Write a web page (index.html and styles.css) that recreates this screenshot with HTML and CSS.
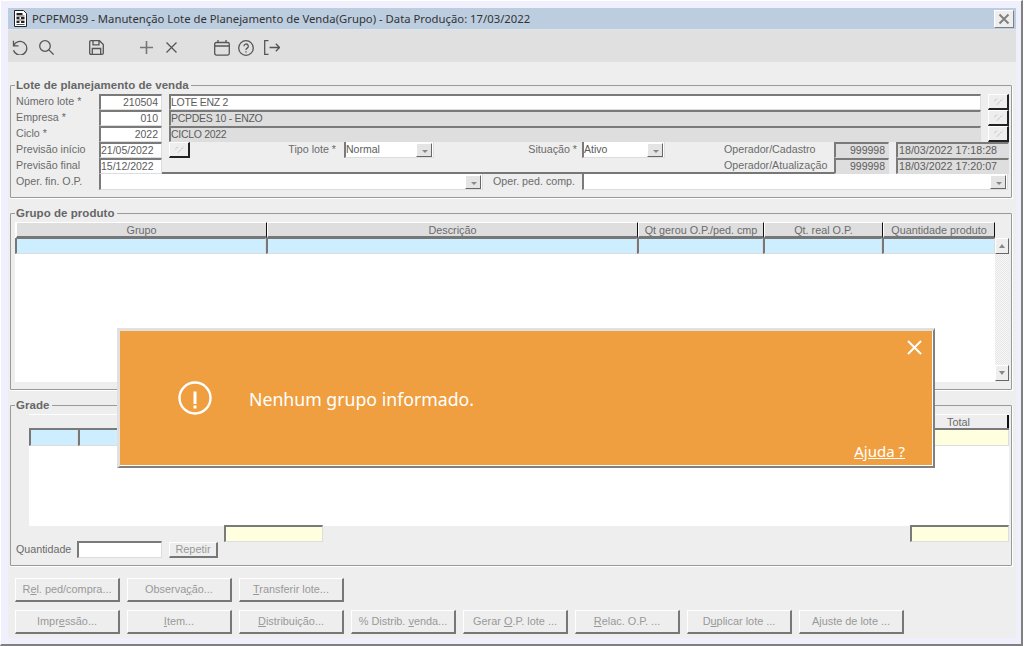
FILE: index.html
```html
<!DOCTYPE html>
<html lang="pt">
<head>
<meta charset="utf-8">
<title>PCPFM039</title>
<link rel="stylesheet" href="styles.css">
</head>
<body>
<div class="window">
  <header class="titlebar">
    <svg class="title-icon" width="13" height="17" viewBox="0 0 13 17"><path d="M.5.5h9l3 3v13H.5z" fill="#fff" stroke="#222"/><path d="M2.500 3h6v2h-6zM2.500 7h3v2h-3zM7 7h3.500v2H7zM2.500 11h3v2h-3zM7 11h3.500v2H7z" fill="#222"/><path d="M2.500 6h8M2.500 10h8M2.500 14.500h8" stroke="#555"/></svg>
    <span class="title-text">PCPFM039 - Manutenção Lote de Planejamento de Venda(Grupo) - Data Produção: 17/03/2022</span>
    <span class="title-close"><svg width="12" height="12" viewBox="0 0 12 12"><path d="M1.500 1.500l9 9M10.500 1.500l-9 9" stroke="#808080" stroke-width="2"/></svg></span>
  </header>
  <nav class="toolbar">
    <svg class="ti ti-undo" width="17" height="15" viewBox="0 0 17 15"><path d="M1.500 .8v5h5M1.700 5.700a6.800 6.800 0 1 1-.2 4.500"/></svg>
    <svg class="ti ti-search" width="15" height="15" viewBox="0 0 15 15"><circle cx="6" cy="6" r="5.300"/><path d="M9.900 9.900l4.700 4.700"/></svg>
    <svg class="ti ti-save" width="15" height="15" viewBox="0 0 15 15"><path d="M.7 2q0-1.300 1.300-1.300h8.500l3.800 3.800V13q0 1.300-1.300 1.300H2q-1.300 0-1.300-1.300zM4 .8v4h6v-4M3.300 14.200V8.500h8.400v5.700"/></svg>
    <svg class="ti ti-plus" width="13" height="13" viewBox="0 0 13 13"><path d="M6.500 0v13M0 6.500h13"/></svg>
    <svg class="ti ti-x" width="11" height="11" viewBox="0 0 11 11"><path d="M.5.500l10 10M10.500.500l-10 10"/></svg>
    <svg class="ti ti-cal" width="16" height="16" viewBox="0 0 16 16"><path d="M2.500 2.500h11q1.800 0 1.800 1.800v9q0 1.800-1.800 1.800h-11q-1.800 0-1.800-1.800v-9q0-1.800 1.800-1.800zM.7 6h14.600M4 0v2.500M12 0v2.500"/></svg>
    <svg class="ti ti-help" width="16" height="16" viewBox="0 0 16 16"><circle cx="8" cy="8" r="7.300"/><path d="M5.900 6.200a2.200 2.200 0 1 1 3.300 1.900c-.8.500-1.200.9-1.200 1.800M8 11.200v1.200"/></svg>
    <svg class="ti ti-exit" width="16" height="15" viewBox="0 0 16 15"><path d="M4.500.7H.7v13.600h3.800M5.500 7.500h10M11.800 3.800l3.700 3.700-3.700 3.700"/></svg>
  </nav>
  <main class="content">
    <section class="group group-lote">
      <h2 class="legend">Lote de planejamento de venda</h2>
      <div class="row">
        <label class="lbl">Número lote *</label>
        <span class="field w-code num">210504</span>
        <span class="field w-desc">LOTE ENZ 2</span>
        <span class="lookup"><svg width="9" height="7" viewBox="0 0 9 7"><path d="M0 3.500L3 .5M3 6.500L8.500 1"/></svg></span>
      </div>
      <div class="row">
        <label class="lbl">Empresa *</label>
        <span class="field w-code num">010</span>
        <span class="field w-desc ro">PCPDES 10 - ENZO</span>
        <span class="lookup"><svg width="9" height="7" viewBox="0 0 9 7"><path d="M0 3.500L3 .5M3 6.500L8.500 1"/></svg></span>
      </div>
      <div class="row">
        <label class="lbl">Ciclo *</label>
        <span class="field w-code num">2022</span>
        <span class="field w-desc ro">CICLO 2022</span>
        <span class="lookup"><svg width="9" height="7" viewBox="0 0 9 7"><path d="M0 3.500L3 .5M3 6.500L8.500 1"/></svg></span>
      </div>
      <div class="row">
        <label class="lbl">Previsão início</label>
        <span class="field w-code">21/05/2022</span>
        <span class="lookup"><svg width="9" height="7" viewBox="0 0 9 7"><path d="M0 3.500L3 .5M3 6.500L8.500 1"/></svg></span>
        <label class="lbl-r w-tipo">Tipo lote *</label>
        <span class="field combo w-sel1">Normal<b class="drop"></b></span>
        <label class="lbl-r w-sit">Situação *</label>
        <span class="field combo w-sel2">Ativo<b class="drop"></b></span>
        <label class="lbl-op">Operador/Cadastro</label>
        <span class="field ro num w-opn">999998</span>
        <span class="field ro w-opd">18/03/2022 17:18:28</span>
      </div>
      <div class="row">
        <label class="lbl">Previsão final</label>
        <span class="field w-code">15/12/2022</span>
        <span class="ruled"></span>
        <label class="lbl-op lbl-op2">Operador/Atualização</label>
        <span class="field ro num w-opn">999998</span>
        <span class="field ro w-opd">18/03/2022 17:20:07</span>
      </div>
      <div class="row">
        <label class="lbl">Oper. fin. O.P.</label>
        <span class="field combo w-fin"><b class="drop"></b></span>
        <label class="lbl-r w-ped">Oper. ped. comp.</label>
        <span class="field combo w-comp"><b class="drop"></b></span>
      </div>
    </section>

    <section class="group group-prod">
      <h2 class="legend">Grupo de produto</h2>
      <div class="table-wrap">
        <div class="table">
          <div class="thead">
            <span class="th c-grupo">Grupo</span>
            <span class="th c-desc">Descrição</span>
            <span class="th c-qt1">Qt gerou O.P./ped. cmp</span>
            <span class="th c-qt2">Qt. real O.P.</span>
            <span class="th c-qt3">Quantidade produto</span>
          </div>
          <div class="tr">
            <span class="td c-grupo"></span>
            <span class="td c-desc"></span>
            <span class="td c-qt1"></span>
            <span class="td c-qt2"></span>
            <span class="td c-qt3"></span>
          </div>
        </div>
        <div class="scroll">
          <span class="sbtn"><i class="up"></i></span>
          <span class="strack"></span>
          <span class="sbtn"><i class="down"></i></span>
        </div>
      </div>
    </section>

    <section class="group group-grade">
      <h2 class="legend">Grade</h2>
      <div class="grade-table">
        <div class="grade-head"><span class="th th-total">Total</span></div>
        <div class="grade-row">
          <span class="td g-a"></span>
          <span class="td g-b"></span>
          <span class="g-fill"></span>
          <span class="g-total"></span>
        </div>
      </div>
      <div class="grade-sum">
        <span class="yellow y-a"></span>
        <span class="yellow y-b"></span>
      </div>
      <div class="qty-row">
        <label class="lbl-q">Quantidade</label>
        <span class="field w-qty"></span>
        <span class="btn btn-rep">Repetir</span>
      </div>
    </section>

    <div class="actions">
      <div class="btn-row">
        <span class="btn">R<u>e</u>l. ped/compra...</span>
        <span class="btn">Observa<u>ç</u>ão...</span>
        <span class="btn"><u>T</u>ransferir lote...</span>
      </div>
      <div class="btn-row">
        <span class="btn">Impr<u>e</u>ssão...</span>
        <span class="btn"><u>I</u>tem...</span>
        <span class="btn"><u>D</u>istribuição...</span>
        <span class="btn">% Distrib. <u>v</u>enda...</span>
        <span class="btn">Gerar <u>O</u>.P. lote ...</span>
        <span class="btn"><u>R</u>elac. O.P. ...</span>
        <span class="btn">D<u>u</u>plicar lote ...</span>
        <span class="btn">A<u>j</u>uste de lote ...</span>
      </div>
    </div>
  </main>

  <div class="toast">
    <svg class="toast-x" width="15" height="15" viewBox="0 0 15 15"><path d="M1 1l13 13M14 1L1 14"/></svg>
    <svg class="toast-icon" width="34" height="34" viewBox="0 0 34 34"><circle cx="17" cy="17" r="15.500"/><path class="toast-bang" d="M17 10.500v12.500M17 24.500v3"/></svg>
    <span class="toast-msg">Nenhum grupo informado.</span>
    <a class="toast-help">Ajuda ?</a>
  </div>
</div>
</body>
</html>
```
FILE: styles.css
```css
* { box-sizing: border-box; }
html, body { margin: 0; padding: 0; }
body { width: 1025px; height: 646px; overflow: hidden; background: #fff; font-family: "Liberation Sans", Arial, sans-serif; font-size: 10.7px; color: #6b6b6b; }
.window { position: relative; width: 1023px; height: 646px; padding: 7px 5px 6px 7px; background: #f0f0fc; border-style: solid; border-width: 1px 2px 2px 1px; border-color: #fff #808080 #808080 #fff; display: flex; flex-direction: column; }

.titlebar { height: 22px; flex: none; background: #bccddf; display: flex; align-items: center; padding-left: 6px; border-bottom: 1px solid #dfe6ee; }
.title-icon { flex: none; }
.title-text { margin-left: 5px; font-family: "Noto Sans", sans-serif; font-size: 11.3px; color: #333; white-space: nowrap; }
.title-close { margin-left: auto; margin-right: 2px; width: 20px; height: 18px; background: #eee; border: 1px solid; border-color: #fff #808080 #808080 #fff; display: flex; align-items: center; justify-content: center; }

.toolbar { height: 32px; flex: none; background: #e0e0e0; display: flex; align-items: center; padding: 3px 0 0 4px; }
.ti { flex: none; fill: none; stroke: #555; stroke-width: 1.3; }
.ti-search { margin-left: 10px; }
.ti-save { margin-left: 35px; }
.ti-plus { margin-left: 36px; stroke-width: 1.6; stroke: #777; }
.ti-x { margin-left: 13px; }
.ti-cal { margin-left: 37px; }
.ti-help { margin-left: 8px; }
.ti-exit { margin-left: 10px; }

.content { flex: 1; background: #eee; padding: 23px 4px 0 2px; min-height: 0; }

.group { position: relative; border: 1px solid #9a9a9a; box-shadow: 1px 1px 0 #fff; border-radius: 1px; }
.legend { position: absolute; left: 4px; top: -7px; margin: 0; padding: 0 2px 0 1px; background: #eee; font-size: 11.5px; line-height: 13px; font-weight: bold; color: #666; white-space: nowrap; letter-spacing: .05px; }
.group-lote { height: 113px; padding: 8px 2px 0 5px; }
.group-prod { height: 177px; margin-top: 15px; padding: 8px 1px 0 4px; }
.group-grade { height: 161px; margin-top: 15px; padding: 8px 1px 0 18px; }

.row { display: flex; height: 16px; align-items: stretch; white-space: nowrap; }
.lbl { width: 83px; flex: none; line-height: 14px; }
.lbl-r { flex: none; text-align: right; line-height: 15px; }
.lbl-op { flex: none; width: 110px; margin-left: 59px; line-height: 15px; }
.lbl-op2 { margin-left: 0; border-bottom: 2px solid #777; }
.field { display: block; flex: none; position: relative; height: 16px; background: #fff; color: #5c5c5c; font-size: 10.5px; line-height: 13px; padding-left: 0; border-style: solid; border-width: 2px 1px 1px 2px; border-color: #7a7a7a #ddd #ddd #7a7a7a; overflow: hidden; }
.num { text-align: right; padding-right: 3px; }
.ro { background: #dedede; }
.w-code { width: 63px; }
.w-desc { width: 812px; margin-left: 7px; letter-spacing: -.3px; }
.w-sel1 { width: 90px; }
.w-sel2 { width: 83px; }
.w-tipo { width: 146px; margin-right: 8px; }
.w-sit { width: 143px; margin-right: 5px; }
.w-opn { width: 55px; }
.w-opd { width: 113px; margin-left: 7px; padding-left: 1px; font-size: 10.7px; }
.w-fin { width: 384px; }
.w-ped { width: 92px; margin-right: 7px; }
.w-comp { width: 426px; }
.combo { border-top-width: 0; line-height: 14px; }
.drop { position: absolute; right: 1px; top: 1px; width: 16px; height: 14px; background: #e4e4e4; border: 1px solid; border-color: #fff #666 #666 #fff; }
.drop::after { content: ""; position: absolute; left: 5px; top: 6px; border: 3px solid transparent; border-top: 3px solid #888; border-bottom: 0; }

.lookup { flex: none; width: 21px; height: 16px; margin-left: 7px; background: #eee; border-style: solid; border-width: 1px 2px 2px 1px; border-color: #fff #222 #222 #fff; display: flex; align-items: center; justify-content: center; }
.lookup svg { fill: none; stroke: #aaa; stroke-width: 1; stroke-dasharray: 1.400 1; }
.ruled { flex: none; width: 562px; height: 16px; border-bottom: 2px solid #777; }

.table-wrap { display: flex; height: 160px; }
.table { width: 980px; background: #fff; height: 160px; }
.thead { display: flex; height: 16px; padding-left: 1px; }
.th { display: block; flex: none; height: 16px; background: #dedede; font-size: 10.8px; text-align: center; line-height: 14px; border-style: solid; border-width: 1px 1px 2px 1px; border-color: #fff #111 #777 #fff; color: #6b6b6b; }
.tr { display: flex; height: 16px; }
.td { display: block; flex: none; height: 16px; background: #cceeff; border-style: solid; border-width: 1px 1px 1px 2px; border-color: #777 #ddd #ddd #777; }
.c-grupo { width: 251px; }
.c-desc { width: 371px; }
.c-qt1 { width: 126px; }
.c-qt2 { width: 119px; }
.c-qt3 { width: 113px; }
.thead .c-qt3 { width: 112px; }
.scroll { flex: none; width: 14px; margin-top: 16px; height: 143px; display: flex; flex-direction: column; }
.sbtn { flex: none; height: 16px; background: #eee; border: 1px solid; border-color: #fff #666 #666 #fff; display: flex; align-items: center; justify-content: center; }
.strack { flex: 1; background-color: #f4f4f4; background-image: repeating-conic-gradient(#e6e6e6 0 25%, #f8f8f8 0 50%); background-size: 2px 2px; }
.sbtn i { width: 0; height: 0; border: 3px solid transparent; }
.sbtn .up { border-bottom: 4px solid #888; border-top: 0; }
.sbtn .down { border-top: 4px solid #888; border-bottom: 0; }

.grade-table { width: 980px; height: 112px; background: #fff; }
.grade-head { height: 16px; display: flex; justify-content: flex-end; background: #eee; border-top: 1px solid #fff; border-bottom: 2px solid #7a7a7a; }
.th-total { width: 99px; height: 13px; background: #eee; border-width: 0 2px 0 0; line-height: 14px; }
.grade-row { display: flex; height: 16px; }
.grade-row .td { border-top-width: 0; }
.g-a { width: 49px; }
.g-b { width: 40px; }
.g-fill { flex: 1; }
.g-total { flex: none; width: 99px; background: #ffffdf; border-bottom: 1px solid #ddd; border-right: 1px solid #ddd; }
.grade-sum { position: relative; display: flex; height: 0; }
.yellow { display: block; flex: none; width: 99px; height: 17px; background: #ffffdf; border-style: solid; border-width: 2px 1px 1px 2px; border-color: #7a7a7a #ddd #ddd #7a7a7a; margin-top: -1px; }
.y-a { margin-left: 195px; }
.y-b { margin-left: 587px; }
.qty-row { display: flex; height: 17px; margin-top: 15px; margin-left: -13px; }
.lbl-q { flex: none; width: 61px; line-height: 16px; }
.w-qty { width: 85px; height: 17px; }
.btn { display: block; flex: none; height: 24px; width: 105px; font-size: 10.9px; color: #999; background: #eee; border-style: solid; border-width: 1px 2px 2px 1px; border-color: #fff #777 #777 #fff; white-space: nowrap; text-align: center; line-height: 20px; }
.btn u { text-underline-offset: 1px; }
.btn-rep { width: 49px; height: 16px; margin: 1px 0 0 7px; line-height: 13px; }

.actions { margin-top: 12px; padding-left: 5px; display: flex; flex-direction: column; gap: 8px; }
.btn-row { display: flex; gap: 7px; }

.toast { position: absolute; left: 116px; top: 327px; width: 818px; height: 140px; background: #ef9f3f; border-style: solid; border-width: 3px 2px 2px 3px; border-color: #e0e0e0 #808080 #808080 #e0e0e0; box-shadow: inset -1px -1px 0 #fff; color: #fff; }
.toast-x { position: absolute; right: 11px; top: 9px; fill: none; stroke: #fff; stroke-width: 2; }
.toast-icon { position: absolute; left: 58px; top: 50px; fill: none; stroke: #fff; stroke-width: 2.4; }
.toast-bang { stroke-width: 3; }
.toast-msg { position: absolute; left: 129px; top: 57px; font-family: "Noto Sans", sans-serif; font-size: 17.7px; line-height: 22px; white-space: nowrap; }
.toast-help { position: absolute; right: 28px; top: 111px; font-family: "Noto Sans", sans-serif; font-size: 15px; line-height: 18px; text-decoration: underline; color: #fff; }
```
